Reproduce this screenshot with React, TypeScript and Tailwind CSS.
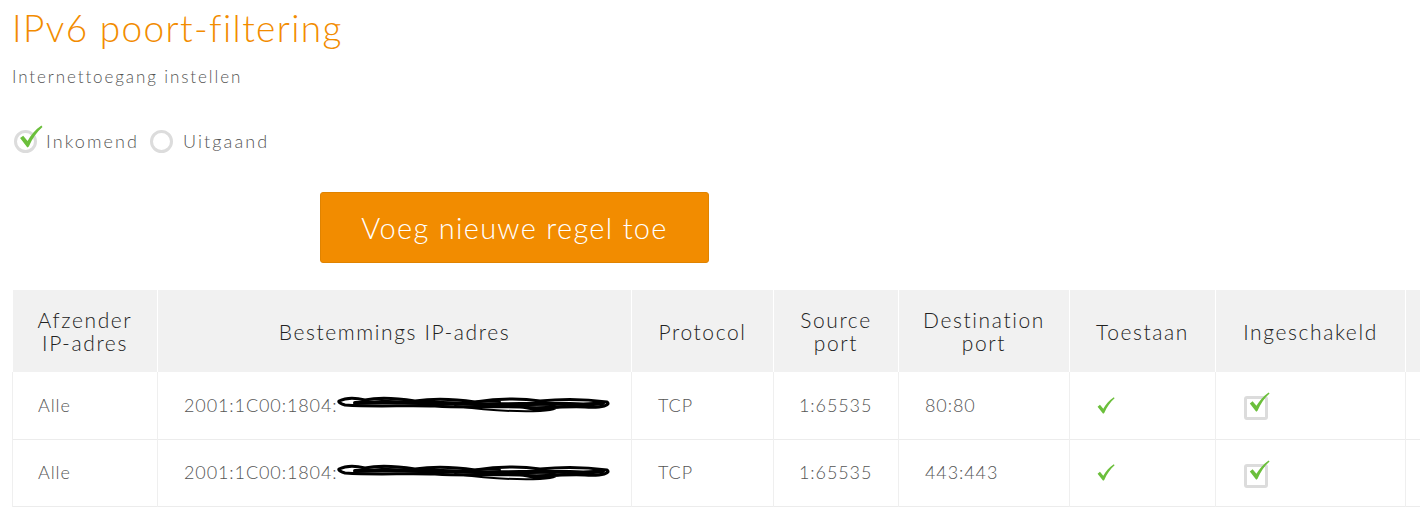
import React from "react";

const GREEN = "#6bbf3b";

function CheckMark({ className = "" }: { className?: string }) {
  return (
    <svg className={className} viewBox="0 0 24 24" fill={GREEN}>
      <path d="M2 13.5 L5 11.2 L9.2 16.2 C12.5 10.5 16.5 5.5 22.5 1.5 L23.5 2.8 C18 7.5 14 13.5 10.4 21.5 L9 22.5 Z" />
    </svg>
  );
}

// hand-drawn redaction over the rest of the address
function Scribble() {
  return (
    <svg className="w-[278px] h-[22px] -ml-[2px]" viewBox="0 0 278 22" fill="none" stroke="#000" strokeLinecap="round" strokeLinejoin="round">
      <path d="M4 7 C12 3 22 4 30 6 C45 3 60 4 80 7 C100 4 120 5 140 8 C160 5 185 4 205 7 C225 5 250 5 272 8 C276 11 268 14 250 13 C230 12 205 15 185 13 C160 12 130 14 100 12 C70 11 40 13 10 11 C6 10 3 8 4 7" strokeWidth="3" />
      <path d="M20 9 C60 7 100 9 140 10 C170 11 200 9 235 10 C250 11 262 10 268 9" strokeWidth="4" />
      <path d="M120 12 C150 16 180 18 205 17 C220 16 228 13 215 11 C200 9 185 12 190 14 C200 17 215 15 230 12" strokeWidth="2" />
      <path d="M40 5 C70 10 95 12 120 10 C140 8 150 6 165 8" strokeWidth="2" />
    </svg>
  );
}

const headers = [
  { label: ["Afzender", "IP-adres"], w: "w-[145px]" },
  { label: ["Bestemmings IP-adres"], w: "w-[474px]" },
  { label: ["Protocol"], w: "w-[142px]" },
  { label: ["Source", "port"], w: "w-[125px]" },
  { label: ["Destination", "port"], w: "w-[171px]" },
  { label: ["Toestaan"], w: "w-[146px]" },
  { label: ["Ingeschakeld"], w: "w-[190px]" },
  { label: [""], w: "w-[120px]" },
];

const rows = [
  { src: "Alle", dst: "2001:1C00:1804:", proto: "TCP", sport: "1:65535", dport: "80:80" },
  { src: "Alle", dst: "2001:1C00:1804:", proto: "TCP", sport: "1:65535", dport: "443:443" },
];

export default function App() {
  return (
    <div className="w-[1420px] h-[527px] overflow-hidden bg-white font-['Lato',sans-serif] font-light text-[#555]">
      <div className="pl-3 pt-[5px]">
        <h1 className="text-[37px] leading-[46px] font-light text-[#f28c00] tracking-[1.35px]">IPv6 poort-filtering</h1>
        <p className="mt-[14px] text-[17px] leading-6 text-[#555] tracking-[1.9px]">Internettoegang instellen</p>

        {/* direction radios */}
        <div className="mt-[39px] flex items-center text-[18px] text-[#555] tracking-[2.1px]">
          <span className="relative w-[23px] h-[23px] ml-[2px] rounded-full border-[3px] border-[#dcdcdc]">
            <CheckMark className="absolute -top-[10px] left-[1px] w-[25px] h-[27px]" />
          </span>
          <span className="ml-[9px]">Inkomend</span>
          <span className="ml-[11px] w-[23px] h-[23px] rounded-full border-[3px] border-[#dcdcdc]" />
          <span className="ml-[10px]">Uitgaand</span>
        </div>

        <div className="mt-[37px] pl-[308px]">
          <button className="w-[389px] h-[71px] rounded-[3px] bg-[#f28c00] border border-[#e08300] text-white text-[29px] font-light tracking-[1.3px]">
            Voeg nieuwe regel toe
          </button>
        </div>
      </div>

      {/* rules table */}
      <div className="mt-[27px] pl-3">
        <table className="table-fixed border-collapse w-[1513px]">
          <thead>
            <tr className="bg-[#f1f1f1] h-[82px]">
              {headers.map((h, i) => (
                <th key={i} className={`${h.w} font-light text-[21px] leading-[23px] text-[#222] text-center border-x border-white tracking-[1.6px]`}>
                  {h.label.map((l, j) => (
                    <div key={j}>{l}</div>
                  ))}
                </th>
              ))}
            </tr>
          </thead>
          <tbody>
            {rows.map((r, i) => (
              <tr key={i} className="h-[67px] border-b border-[#ececec] text-[18px] text-[#555] tracking-[0.9px]">
                <td className="pl-[25px] border-x border-[#efefef]">{r.src}</td>
                <td className="pl-[26px] border-x border-[#efefef]">
                  <div className="flex items-center">
                    <span>{r.dst}</span>
                    <Scribble />
                  </div>
                </td>
                <td className="pl-[26px] border-x border-[#efefef]">{r.proto}</td>
                <td className="pl-[25px] border-x border-[#efefef]">{r.sport}</td>
                <td className="pl-[26px] border-x border-[#efefef]">{r.dport}</td>
                <td className="pl-[26px] border-x border-[#efefef]">
                  <CheckMark className="w-[19px] h-[21px]" />
                </td>
                <td className="pl-[28px] border-x border-[#efefef]">
                  <span className="relative block w-[24px] h-[24px] mt-[6px] rounded-[3px] border-[3px] border-[#dcdcdc] bg-white">
                    <CheckMark className="absolute -top-[10px] left-[1px] w-[22px] h-[26px]" />
                  </span>
                </td>
                <td className="border-x border-[#efefef]" />
              </tr>
            ))}
          </tbody>
        </table>
      </div>
    </div>
  );
}
